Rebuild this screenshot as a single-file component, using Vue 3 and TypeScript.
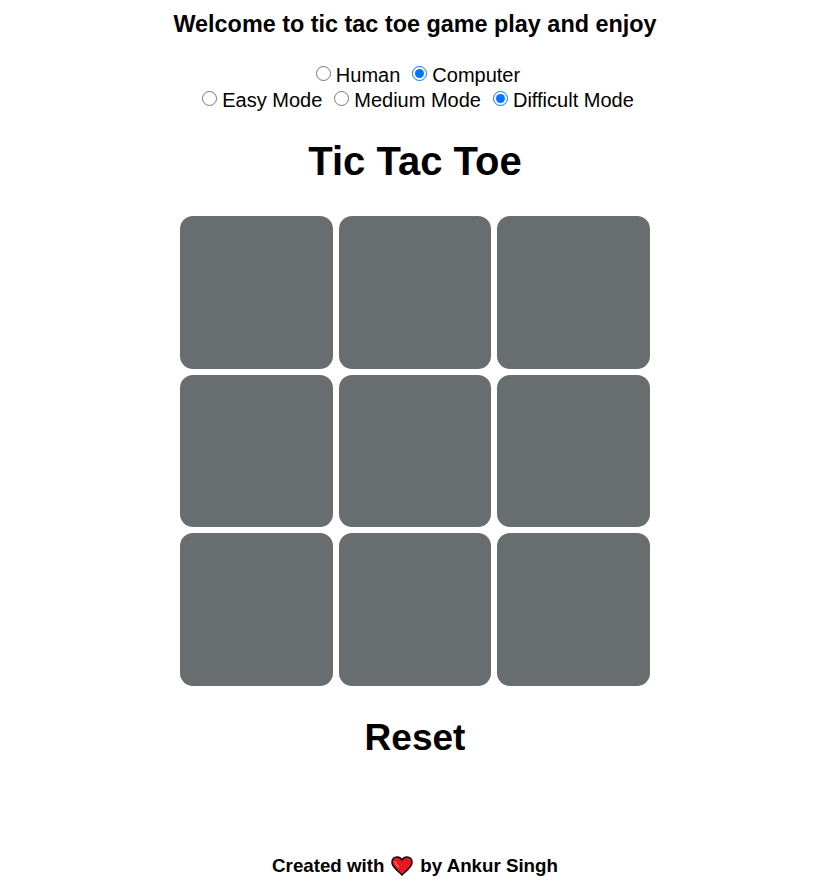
<script setup lang="ts">
import { computed, ref } from 'vue'

type Mark = '' | 'X' | 'O'

const opponents = ['Human', 'Computer']
const levels = ['Easy', 'Medium', 'Difficult']
const lines = [
  [0, 1, 2], [3, 4, 5], [6, 7, 8],
  [0, 3, 6], [1, 4, 7], [2, 5, 8],
  [0, 4, 8], [2, 4, 6],
]

const opponent = ref('Computer')
const level = ref('Difficult')
const cells = ref<Mark[]>(Array(9).fill(''))
const turn = ref<'X' | 'O'>('X')

function wins(board: Mark[], mark: Mark): boolean {
  return lines.some((line) => line.every((i) => board[i] === mark))
}

function openCells(board: Mark[]): number[] {
  return board.map((_, i) => i).filter((i) => board[i] === '')
}

const finished = computed(
  () => wins(cells.value, 'X') || wins(cells.value, 'O') || openCells(cells.value).length === 0,
)

function score(board: Mark[], mark: 'X' | 'O'): number {
  if (wins(board, 'O')) return 1
  if (wins(board, 'X')) return -1
  const open = openCells(board)
  if (!open.length) return 0
  const results = open.map((i) => {
    const next = [...board]
    next[i] = mark
    return score(next, mark === 'O' ? 'X' : 'O')
  })
  return mark === 'O' ? Math.max(...results) : Math.min(...results)
}

function computerMove() {
  const open = openCells(cells.value)
  const chance = { Easy: 0, Medium: 0.5, Difficult: 1 }[level.value] ?? 1
  let choice = open[Math.floor(Math.random() * open.length)]
  if (Math.random() < chance) {
    let best = -2
    for (const i of open) {
      const next = [...cells.value]
      next[i] = 'O'
      const value = score(next, 'X')
      if (value > best) {
        best = value
        choice = i
      }
    }
  }
  cells.value[choice] = 'O'
}

function play(index: number) {
  if (cells.value[index] || finished.value) return
  cells.value[index] = turn.value
  if (opponent.value === 'Human') {
    turn.value = turn.value === 'X' ? 'O' : 'X'
  } else if (!finished.value) {
    computerMove()
  }
}

function reset() {
  cells.value = Array(9).fill('')
  turn.value = 'X'
}
</script>

<template>
  <main class="page">
    <h3 class="welcome">Welcome to tic tac toe game play and enjoy</h3>

    <div class="options">
      <label v-for="name in opponents" :key="name" class="option">
        <input v-model="opponent" type="radio" name="opponent" :value="name" @change="reset" />
        {{ name }}
      </label>
    </div>
    <div class="options">
      <label v-for="name in levels" :key="name" class="option">
        <input v-model="level" type="radio" name="level" :value="name" @change="reset" />
        {{ name }} Mode
      </label>
    </div>

    <h1 class="title">Tic Tac Toe</h1>

    <div class="board">
      <button
        v-for="(mark, index) in cells"
        :key="index"
        type="button"
        class="cell"
        :aria-label="`Cell ${index + 1}`"
        @click="play(index)"
      >{{ mark }}</button>
    </div>

    <button type="button" class="reset" @click="reset">Reset</button>

    <footer class="footer">
      <h3 class="credit">
        <span>Created with</span>
        <svg class="heart" viewBox="0 0 22 20" aria-hidden="true">
          <path
            d="M11 19 C9.5 17 1 11.5 1 6.2 C1 3 3.2 1 6 1 C8.3 1 10.2 2.3 11 4.2 C11.8 2.3 13.7 1 16 1 C18.8 1 21 3 21 6.2 C21 11.5 12.5 17 11 19 Z"
            fill="#e81722"
            stroke="#160507"
            stroke-width="1.6"
            stroke-linejoin="round"
          />
          <path d="M4.2 5.5 C4.6 8 6 9.8 7.6 11.2" fill="none" stroke="#f4625f" stroke-width="1.6" stroke-linecap="round" />
        </svg>
        <span>by Ankur Singh</span>
      </h3>
    </footer>
  </main>
</template>

<style>
body {
  margin: 0;
  background: #fff;
}
</style>

<style scoped>
.page {
  display: flex;
  flex-direction: column;
  align-items: center;
  padding: 11px 0 8px 7px;
  color: #000;
  font-family: "Liberation Sans", Arial, sans-serif;
  font-size: 20px;
}

.welcome {
  margin: 0 0 26px;
  line-height: 26px;
}

.options {
  display: flex;
  flex-wrap: wrap;
  justify-content: center;
  column-gap: 6px;
  line-height: 25px;
}

.option {
  display: flex;
  align-items: center;
  gap: 5px;
}

.option input {
  width: 15px;
  height: 15px;
  margin: 0 0 4px 6px;
}

.title {
  margin: 25px 0 32px;
  font-size: 40px;
  line-height: 46px;
}

.board {
  display: grid;
  grid-template-columns: repeat(3, 1fr);
  gap: 6px;
  box-sizing: border-box;
  width: 100%;
  max-width: 470px;
}

.cell {
  aspect-ratio: 1;
  min-width: 0;
  padding: 0;
  border: 0;
  border-radius: 13px;
  background: #686e70;
  color: #fff;
  font: bold 80px "Liberation Sans", Arial, sans-serif;
  line-height: 1;
  cursor: pointer;
}

.reset {
  margin: 30px 0 0;
  padding: 0;
  border: 0;
  background: none;
  color: inherit;
  font: bold 37px "Liberation Sans", Arial, sans-serif;
  line-height: 44px;
  cursor: pointer;
}

.footer {
  margin-top: 95px;
  font-size: 16px;
}

.credit {
  display: flex;
  align-items: center;
  justify-content: center;
  gap: 7px;
  margin: 0;
  line-height: 22px;
}

.heart {
  width: 22px;
  height: 20px;
}
</style>
